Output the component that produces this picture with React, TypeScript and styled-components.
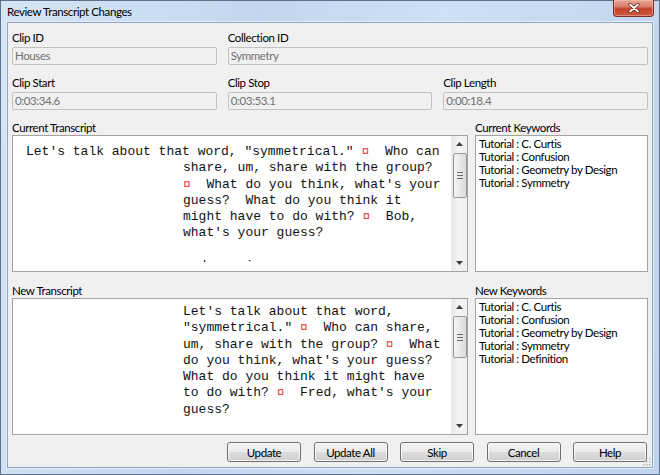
import React from 'react';
import styled, { createGlobalStyle } from 'styled-components';

const UI_FONT = `Lato, "Noto Sans", "Liberation Sans", sans-serif`;
const MONO_FONT = `"Liberation Mono", "DejaVu Sans Mono", monospace`;

const Global = createGlobalStyle`
  html, body { margin: 0; padding: 0; background: #ffffff; }
  body { font-family: ${UI_FONT}; }
  #root { width: 660px; height: 475px; }
`;

const Window = styled.div`
  width: 660px;
  height: 475px;
  box-sizing: border-box;
  display: flex;
  flex-direction: column;
  border: 1px solid #5c728e;
  background: linear-gradient(100deg, #d6e5f5 0%, #c2d7ef 35%, #cde0f4 60%, #bed4ec 100%);
  font-family: ${UI_FONT};
  font-size: 11.5px;
  letter-spacing: -0.4px;
  color: #000;
`;

const TitleBar = styled.div`
  height: 21px;
  display: flex;
  align-items: flex-start;
  padding-left: 6px;
  padding-right: 5px;
`;

const Title = styled.div`
  height: 21px;
  line-height: 22px;
  color: #000;
  flex: 1;
`;

const CloseButton = styled.div`
  width: 41px;
  height: 17px;
  margin-top: -1px;
  box-sizing: border-box;
  border: 1px solid #7a2f22;
  border-top: none;
  border-radius: 0 0 4px 4px;
  background: linear-gradient(to bottom, #e9a596 0%, #d8806c 40%, #c4432c 55%, #cf5a41 100%);
  display: flex;
  align-items: center;
  justify-content: center;
  box-shadow: inset 0 0 0 1px rgba(255, 200, 190, 0.45);
`;

const Client = styled.div`
  position: relative;
  flex: 1;
  margin: 0 6px 6px 6px;
  border: 1px solid #8ea5c1;
  box-shadow: 0 0 0 1px #e4edf8;
  background: #f0f0f0;
  padding: 7px 4px 5px 4px;
  display: flex;
  flex-direction: column;
`;

const FieldGrid = styled.div`
  display: grid;
  grid-template-columns: repeat(3, 1fr);
  column-gap: 11px;
  row-gap: 10px;
`;

const Field = styled.div<{ $span?: number }>`
  display: flex;
  flex-direction: column;
  grid-column: span ${(p) => p.$span ?? 1};
`;

const Label = styled.div<{ $gap?: number }>`
  height: 14px;
  line-height: 15px;
  margin-bottom: ${(p) => p.$gap ?? 3}px;
  color: #000;
  white-space: nowrap;
`;

const ReadOnlyBox = styled.div`
  height: 18px;
  box-sizing: border-box;
  border: 1px solid #c2c2c2;
  border-radius: 2px;
  background: #f0f0f0;
  padding-left: 2px;
  line-height: 16px;
  color: #707070;
`;

const PanelRow = styled.div<{ $top: number }>`
  display: grid;
  grid-template-columns: 1fr 173px;
  column-gap: 7px;
  margin-top: ${(p) => p.$top}px;
`;

const Panel = styled.div`
  display: flex;
  flex-direction: column;
`;

const TextBox = styled.div`
  height: 137px;
  box-sizing: border-box;
  border: 1px solid #a3a3a3;
  background: #ffffff;
  display: flex;
`;

const TranscriptBody = styled.div<{ $top: number; $clip?: number }>`
  flex: 1;
  align-self: flex-start;
  margin-top: ${(p) => p.$top}px;
  padding-left: 13px;
  height: ${(p) => (p.$clip ? `${p.$clip}px` : 'auto')};
  overflow: hidden;
  font-family: ${MONO_FONT};
  font-size: 13px;
  letter-spacing: 0;
  line-height: 16.3px;
  color: #111;
`;

const Line = styled.div<{ $indent: number }>`
  padding-left: ${(p) => p.$indent}px;
  white-space: pre;
  height: 16.3px;
`;

const Mark = styled.span`
  color: #e4403a;
`;

const ScrollBar = styled.div`
  width: 15px;
  display: flex;
  flex-direction: column;
  background: linear-gradient(to right, #e6e6e6, #f4f4f4 40%, #f0f0f0);
  border-left: 1px solid #ededed;
`;

const ArrowButton = styled.div`
  height: 16px;
  display: flex;
  align-items: center;
  justify-content: center;
`;

const Track = styled.div`
  flex: 1;
  display: flex;
  flex-direction: column;
  align-items: center;
`;

const Thumb = styled.div<{ $h: number }>`
  width: 14px;
  height: ${(p) => p.$h}px;
  margin-top: 1px;
  box-sizing: border-box;
  border: 1px solid #979797;
  border-radius: 2px;
  background: linear-gradient(to right, #f3f3f3, #e9e9e9 50%, #d9d9d9);
  display: flex;
  align-items: center;
  justify-content: center;
`;

const KeywordBox = styled.div`
  height: 137px;
  box-sizing: border-box;
  border: 1px solid #a3a3a3;
  background: #ffffff;
  padding: 1px 3px;
  overflow: hidden;
`;

const KeywordItem = styled.div`
  line-height: 13px;
  height: 13px;
  color: #000;
  white-space: nowrap;
`;

const ButtonRow = styled.div`
  margin-top: 7px;
  display: flex;
  justify-content: flex-end;
  gap: 12.5px;
  padding-right: 1px;
`;

const Button = styled.button`
  width: 74px;
  height: 20px;
  box-sizing: border-box;
  padding: 0;
  border: 1px solid #707070;
  border-radius: 3px;
  background: linear-gradient(to bottom, #f2f2f2 0%, #ebebeb 48%, #dddddd 52%, #cfcfcf 100%);
  box-shadow: inset 0 0 0 1px rgba(255, 255, 255, 0.7);
  font-family: ${UI_FONT};
  font-size: 11.5px;
  letter-spacing: -0.4px;
  color: #000;
  line-height: 17px;
`;

const Grip = styled.svg`
  position: absolute;
  right: 1px;
  bottom: 1px;
`;

function ArrowUp() {
  return (
    <svg width="7" height="4" viewBox="0 0 7 4">
      <path d="M0 4 L3.5 0 L7 4 Z" fill="#3c3c3c" />
    </svg>
  );
}

function ArrowDown() {
  return (
    <svg width="7" height="4" viewBox="0 0 7 4">
      <path d="M0 0 L3.5 4 L7 0 Z" fill="#3c3c3c" />
    </svg>
  );
}

function GripLines() {
  return (
    <svg width="6" height="7" viewBox="0 0 6 7">
      <path d="M0 0.5 H6 M0 3.5 H6 M0 6.5 H6" stroke="#6b6b6b" strokeWidth="1" />
    </svg>
  );
}

function VScroll({ thumb }: { thumb: number }) {
  return (
    <ScrollBar>
      <ArrowButton>
        <ArrowUp />
      </ArrowButton>
      <Track>
        <Thumb $h={thumb}>
          <GripLines />
        </Thumb>
      </Track>
      <ArrowButton>
        <ArrowDown />
      </ArrowButton>
    </ScrollBar>
  );
}

type Seg = string | { m: true };
const M: Seg = { m: true };

function renderLine(segs: Seg[]) {
  return segs.map((s, i) =>
    typeof s === 'string' ? <React.Fragment key={i}>{s}</React.Fragment> : <Mark key={i}>¤</Mark>
  );
}

const HANG = 157;

const currentLines: { indent: number; segs: Seg[] }[] = [
  { indent: 0, segs: [`Let's talk about that word, "symmetrical." `, M, `  Who can`] },
  { indent: HANG, segs: ['share, um, share with the group?'] },
  { indent: HANG, segs: [M, `  What do you think, what's your`] },
  { indent: HANG, segs: ['guess?  What do you think it'] },
  { indent: HANG, segs: ['might have to do with? ', M, '  Bob,'] },
  { indent: HANG, segs: [`what's your guess?`] },
  { indent: HANG, segs: [' '] },
  { indent: HANG, segs: ['and so, is'] },
];

const newLines: Seg[][] = [
  [`Let's talk about that word,`],
  [`"symmetrical." `, M, `  Who can share,`],
  ['um, share with the group? ', M, '  What'],
  [`do you think, what's your guess?`],
  ['What do you think it might have'],
  ['to do with? ', M, `  Fred, what's your`],
  ['guess?'],
];

const currentKeywords = [
  'Tutorial : C. Curtis',
  'Tutorial : Confusion',
  'Tutorial : Geometry by Design',
  'Tutorial : Symmetry',
];

const newKeywords = [...currentKeywords, 'Tutorial : Definition'];

export default function App() {
  return (
    <>
      <Global />
      <Window>
        <TitleBar>
          <Title>Review Transcript Changes</Title>
          <CloseButton>
            <svg width="12" height="10" viewBox="0 0 12 10">
              <path d="M2 1.5 L10 8.5 M10 1.5 L2 8.5" stroke="#5a1a10" strokeWidth="3.2" strokeLinecap="round" />
              <path d="M2 1.5 L10 8.5 M10 1.5 L2 8.5" stroke="#ffffff" strokeWidth="1.8" strokeLinecap="round" />
            </svg>
          </CloseButton>
        </TitleBar>
        <Client>
          <FieldGrid>
            <Field>
              <Label>Clip ID</Label>
              <ReadOnlyBox>Houses</ReadOnlyBox>
            </Field>
            <Field $span={2}>
              <Label>Collection ID</Label>
              <ReadOnlyBox>Symmetry</ReadOnlyBox>
            </Field>
            <Field>
              <Label>Clip Start</Label>
              <ReadOnlyBox>0:03:34.6</ReadOnlyBox>
            </Field>
            <Field>
              <Label>Clip Stop</Label>
              <ReadOnlyBox>0:03:53.1</ReadOnlyBox>
            </Field>
            <Field>
              <Label>Clip Length</Label>
              <ReadOnlyBox>0:00:18.4</ReadOnlyBox>
            </Field>
          </FieldGrid>

          <PanelRow $top={10}>
            <Panel>
              <Label $gap={1}>Current Transcript</Label>
              <TextBox>
                <TranscriptBody $top={8} $clip={118}>
                  {currentLines.map((l, i) => (
                    <Line key={i} $indent={l.indent}>
                      {renderLine(l.segs)}
                    </Line>
                  ))}
                </TranscriptBody>
                <VScroll thumb={45} />
              </TextBox>
            </Panel>
            <Panel>
              <Label $gap={1}>Current Keywords</Label>
              <KeywordBox>
                {currentKeywords.map((k) => (
                  <KeywordItem key={k}>{k}</KeywordItem>
                ))}
              </KeywordBox>
            </Panel>
          </PanelRow>

          <PanelRow $top={11}>
            <Panel>
              <Label $gap={1}>New Transcript</Label>
              <TextBox>
                <TranscriptBody $top={5}>
                  {newLines.map((segs, i) => (
                    <Line key={i} $indent={HANG}>
                      {renderLine(segs)}
                    </Line>
                  ))}
                </TranscriptBody>
                <VScroll thumb={42} />
              </TextBox>
            </Panel>
            <Panel>
              <Label $gap={1}>New Keywords</Label>
              <KeywordBox>
                {newKeywords.map((k) => (
                  <KeywordItem key={k}>{k}</KeywordItem>
                ))}
              </KeywordBox>
            </Panel>
          </PanelRow>

          <ButtonRow>
            <Button>Update</Button>
            <Button>Update All</Button>
            <Button>Skip</Button>
            <Button>Cancel</Button>
            <Button>Help</Button>
          </ButtonRow>

          <Grip width="8" height="8" viewBox="0 0 8 8">
            <rect x="6" y="0" width="1.5" height="1.5" fill="#b5b5b5" />
            <rect x="3" y="3" width="1.5" height="1.5" fill="#b5b5b5" />
            <rect x="6" y="3" width="1.5" height="1.5" fill="#b5b5b5" />
            <rect x="0" y="6" width="1.5" height="1.5" fill="#b5b5b5" />
            <rect x="3" y="6" width="1.5" height="1.5" fill="#b5b5b5" />
            <rect x="6" y="6" width="1.5" height="1.5" fill="#b5b5b5" />
          </Grip>
        </Client>
      </Window>
    </>
  );
}
